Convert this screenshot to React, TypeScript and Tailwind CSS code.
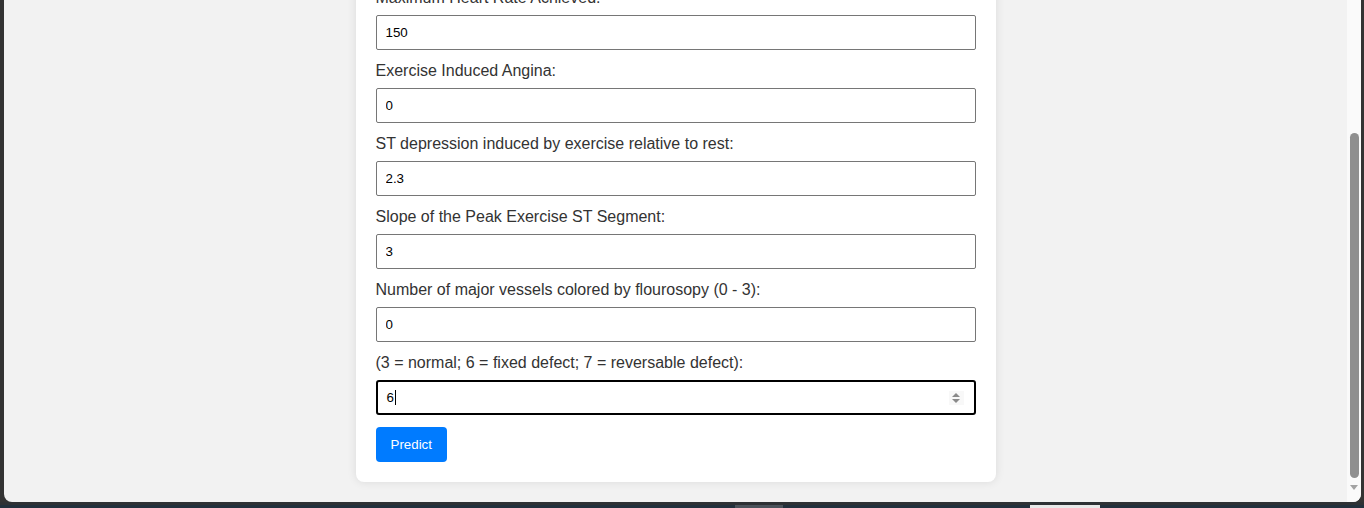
import React from "react";

const fields = [
  { label: "Maximum Heart Rate Achieved:", value: "150" },
  { label: "Exercise Induced Angina:", value: "0" },
  { label: "ST depression induced by exercise relative to rest:", value: "2.3" },
  { label: "Slope of the Peak Exercise ST Segment:", value: "3" },
  { label: "Number of major vessels colored by flourosopy (0 - 3):", value: "0" },
];

const Field = ({ label, value }: { label: string; value: string }) => {
  return (
    <div className="mb-[12px]">
      <label className="block text-[16px] leading-[18px] text-[#333] mb-[8px]">{label}</label>
      <input
        type="text"
        readOnly
        value={value}
        className="block w-full h-[35px] px-[9px] border border-[#767676] rounded-[2px] text-[13.33px] text-black bg-white outline-none"
      />
    </div>
  );
};

const App = () => {
  return (
    <div className="w-[1364px] h-[508px] bg-[#333] overflow-hidden font-['Liberation_Sans',Arial,sans-serif]">
      <div className="flex h-[502px] pl-[4px] pr-[3px]">
        <div className="flex flex-1 bg-[#f2f2f2] rounded-b-[8px] overflow-hidden">
          <div className="flex flex-1 justify-center overflow-hidden">
            <div className="w-[640px] self-start -mt-[31px] bg-white rounded-[8px] px-5 pt-5 pb-5 shadow-[0_0_10px_rgba(0,0,0,0.1)]">
              {fields.map((f) => (
                <Field key={f.label} label={f.label} value={f.value} />
              ))}
              {/* focused thal input */}
              <div>
                <label className="block text-[16px] leading-[18px] text-[#333] mb-[8px]">
                  (3 = normal; 6 = fixed defect; 7 = reversable defect):
                </label>
                <div className="flex items-center h-[35px] pl-[9px] pr-[10px] border-2 border-black rounded-[3px] text-[13.33px] text-black bg-white">
                  <span>6</span>
                  <span className="w-px h-[15px] bg-black ml-px" />
                  <div className="flex-1" />
                  <div className="w-[15px] h-[14px] bg-[#f8f8f8] flex flex-col items-center justify-center gap-[2px]">
                    <svg width="8" height="4" viewBox="0 0 8 4">
                      <path d="M0 4 L4 0 L8 4 Z" fill="#8a8a8a" />
                    </svg>
                    <svg width="8" height="4" viewBox="0 0 8 4">
                      <path d="M0 0 L8 0 L4 4 Z" fill="#8a8a8a" />
                    </svg>
                  </div>
                </div>
              </div>
              <button className="mt-[12px] h-[35px] px-[15px] bg-[#007bff] text-white text-[13.33px] rounded-[4px]">
                Predict
              </button>
            </div>
          </div>
          {/* scrollbar */}
          <div className="w-[14px] bg-[#fafafa] flex flex-col items-center pt-[133px]">
            <div className="w-[9px] h-[345px] bg-[#8f8f8f] rounded-full ml-[1px]" />
            <svg className="mt-[7px]" width="8" height="5" viewBox="0 0 8 5">
              <path d="M0 0 L8 0 L4 5 Z" fill="#a3a3a3" />
            </svg>
          </div>
        </div>
      </div>
      <div className="h-[6px] flex flex-col">
        <div className="h-[3px] bg-[#2e3134]" />
        <div className="h-[3px] bg-[#22303c] flex">
          <div className="w-[735px]" />
          <div className="w-[48px] bg-[#4b535b]" />
          <div className="w-[247px]" />
          <div className="w-[70px] bg-[#e9e9e9]" />
        </div>
      </div>
    </div>
  );
};

export default App;
